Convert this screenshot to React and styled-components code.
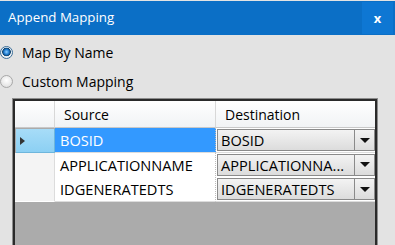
import React from 'react';
import styled, { createGlobalStyle } from 'styled-components';

const GlobalStyle = createGlobalStyle`
  html, body {
    margin: 0;
    padding: 0;
    background: #e3e3e3;
    overflow: hidden;
  }
  * { box-sizing: border-box; }
`;

const Window = styled.div`
  width: 395px;
  height: 245px;
  padding-top: 1px;
  background: #e3e3e3;
  font-family: "Open Sans", "Noto Sans", sans-serif;
  color: #000;
  overflow: hidden;
`;

const TitleBar = styled.div`
  height: 34px;
  display: flex;
  align-items: center;
  justify-content: space-between;
  background: #0b6fc6;
  padding-left: 8px;
`;

const Title = styled.span`
  color: #fff;
  font-size: 13.3px;
  line-height: 1;
`;

const CloseButton = styled.div`
  width: 31px;
  height: 32px;
  margin-right: 2px;
  display: flex;
  align-items: center;
  justify-content: center;
  background: #0e77d3;
  color: #fff;
  font-weight: 700;
  font-size: 13px;
`;

const Options = styled.div`
  display: flex;
  flex-direction: column;
  gap: 9px;
  padding-top: 7px;
`;

const RadioRow = styled.label`
  display: flex;
  align-items: center;
  height: 20px;
  gap: 9px;
  font-size: 14px;
`;

const RadioDot = styled.span`
  width: 13px;
  height: 13px;
  border-radius: 50%;
  border: 1px solid ${p => (p.$checked ? '#3d6f99' : '#a8a8a8')};
  background: ${p =>
    p.$checked
      ? 'radial-gradient(circle at 50% 45%, #8fd0ff 0, #1f7bd0 2.5px, #10436e 4px, #e9edf1 4.6px, #f7f7f7 100%)'
      : 'radial-gradient(circle at 50% 40%, #ffffff 0, #e8e8e8 60%, #d6d6d6 100%)'};
  flex-shrink: 0;
`;

const GridFrame = styled.div`
  margin: 7px 0 0 12px;
  width: 366px;
  height: 160px;
  border: 1px solid #8c8c8c;
  border-bottom: none;
  background: #2a2a2a;
  padding: 2px 2px 0 2px;
`;

const GridBody = styled.div`
  height: 100%;
  background: #ababab;
  display: flex;
  flex-direction: column;
`;

const Row = styled.div`
  display: grid;
  grid-template-columns: 40px 161px 1fr;
  height: ${p => (p.$header ? '27px' : '24.5px')};
`;

const HeaderCell = styled.div`
  display: flex;
  align-items: center;
  padding-left: 9px;
  font-size: 14px;
  background: linear-gradient(#ffffff, #f1f3f5);
  border-right: 1px solid #d8d8d8;
  border-bottom: 1px solid #c8c8c8;
  &:last-child { border-right: none; }
`;

const RowHead = styled.div`
  display: flex;
  align-items: center;
  padding-left: 4px;
  background: ${p => (p.$selected ? 'linear-gradient(#a7dcf8, #8cd0f3)' : '#f4f4f4')};
  border-right: 1px solid ${p => (p.$selected ? '#6eb6dc' : '#dcdcdc')};
  border-bottom: 1px solid ${p => (p.$selected ? '#6eb6dc' : '#ffffff')};
  margin: ${p => (p.$selected ? '1px 0 0 1px' : '0')};
`;

const Arrow = styled.span`
  width: 0;
  height: 0;
  border-top: 4px solid transparent;
  border-bottom: 4px solid transparent;
  border-left: 5px solid #333;
`;

const SourceCell = styled.div`
  display: flex;
  align-items: center;
  padding-left: 5px;
  font-size: 14.6px;
  white-space: nowrap;
  overflow: hidden;
  background: ${p => (p.$selected ? '#3399ff' : '#ffffff')};
  color: ${p => (p.$selected ? '#ffffff' : '#000')};
  border-bottom: 1px solid #dcdcdc;
  border-right: 1px dotted #bdbdbd;
`;

const DestCell = styled.div`
  display: flex;
  align-items: stretch;
  padding: 1px 0 1px 1px;
  background: #ffffff;
  border-bottom: 1px solid #dcdcdc;
`;

const Combo = styled.div`
  flex: 1;
  display: flex;
  border: 1px solid #8a8a8a;
  background: linear-gradient(#f3f3f3, #dcdcdc);
`;

const ComboText = styled.span`
  flex: 1;
  display: flex;
  align-items: center;
  padding-left: 3px;
  font-size: 14.6px;
  white-space: nowrap;
  overflow: hidden;
`;

const ComboButton = styled.span`
  width: 20px;
  display: flex;
  align-items: center;
  justify-content: center;
  border-left: 1px solid #8a8a8a;
  &::after {
    content: '';
    border-left: 5px solid transparent;
    border-right: 5px solid transparent;
    border-top: 5px solid #111;
  }
`;

const rows = [
  { source: 'BOSID', dest: 'BOSID', selected: true },
  { source: 'APPLICATIONNAME', dest: 'APPLICATIONNA...' },
  { source: 'IDGENERATEDTS', dest: 'IDGENERATEDTS' },
];

export default function App() {
  return (
    <>
      <GlobalStyle />
      <Window>
        <TitleBar>
          <Title>Append Mapping</Title>
          <CloseButton>x</CloseButton>
        </TitleBar>
        <Options>
          <RadioRow>
            <RadioDot $checked />
            Map By Name
          </RadioRow>
          <RadioRow>
            <RadioDot />
            Custom Mapping
          </RadioRow>
        </Options>
        <GridFrame>
          <GridBody>
            <Row $header>
              <HeaderCell />
              <HeaderCell>Source</HeaderCell>
              <HeaderCell>Destination</HeaderCell>
            </Row>
            {rows.map(r => (
              <Row key={r.source}>
                <RowHead $selected={r.selected}>{r.selected && <Arrow />}</RowHead>
                <SourceCell $selected={r.selected}>{r.source}</SourceCell>
                <DestCell>
                  <Combo>
                    <ComboText>{r.dest}</ComboText>
                    <ComboButton />
                  </Combo>
                </DestCell>
              </Row>
            ))}
          </GridBody>
        </GridFrame>
      </Window>
    </>
  );
}
